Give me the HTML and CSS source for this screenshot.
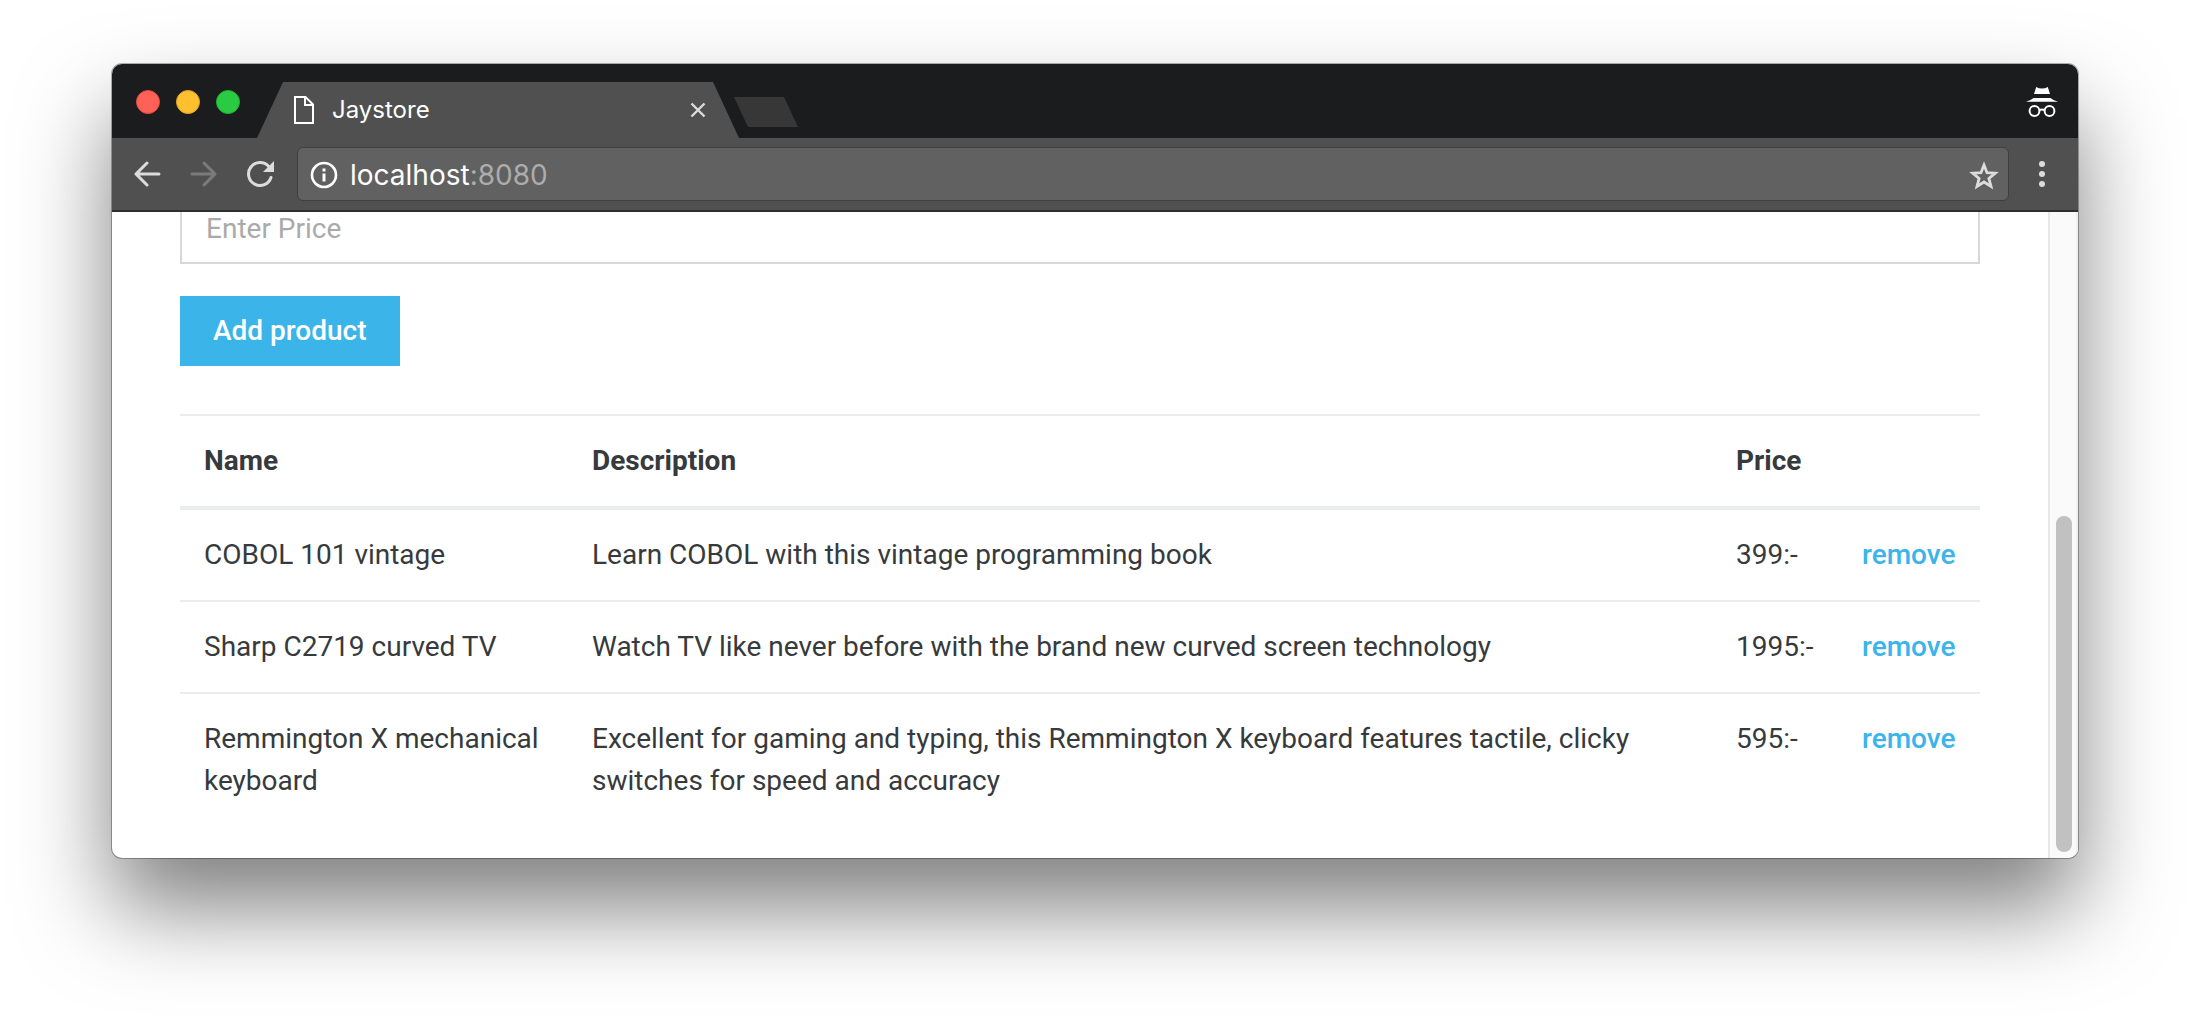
FILE: index.html
```html
<!DOCTYPE html>
<html lang="en">
<head>
<meta charset="utf-8">
<meta name="viewport" content="width=device-width, initial-scale=1">
<title>Jaystore</title>
<link rel="stylesheet" href="styles.css">
</head>
<body>
<div class="window">
  <header class="tabstrip">
    <div class="lights">
      <button class="light light-close" aria-label="Close window"></button>
      <button class="light light-min" aria-label="Minimise window"></button>
      <button class="light light-max" aria-label="Zoom window"></button>
    </div>
    <div class="tab">
      <svg class="tab-icon" width="20" height="28" viewBox="0 0 20 28" fill="none" stroke="#fff" stroke-width="2" aria-hidden="true"><path d="M1 1h10.500l7.500 7.500V27H1z"/><path d="M11 1v8h8"/></svg>
      <span class="tab-title">Jaystore</span>
      <button class="icon-button" aria-label="Close tab"><svg width="16" height="16" viewBox="0 0 16 16" stroke="#dcdcdc" stroke-width="2.400"><path d="M1.500 1.500l13 13M14.500 1.500l-13 13"/></svg></button>
    </div>
    <button class="new-tab" aria-label="New tab"></button>
    <svg class="incognito" width="32" height="30" viewBox="0 0 32 30" aria-hidden="true"><path fill="#fff" d="M8 7l2.200-7q2.500 1.500 5.800 1.500T21.800 0L24 7zM0 14.800Q4 14 7.500 11h17q3.500 3 7.500 3.800z"/><g fill="none" stroke="#fff" stroke-width="2"><circle cx="8.500" cy="24" r="4.900"/><circle cx="23.500" cy="24" r="4.900"/><path d="M13.400 23.200q2.600-1.400 5.200 0"/></g></svg>
  </header>
  <nav class="toolbar" aria-label="Navigation">
    <button class="icon-button" aria-label="Back"><svg width="28" height="28" viewBox="0 0 28 28" fill="none" stroke="#dcdcdc" stroke-width="3" stroke-linecap="round" stroke-linejoin="round"><path d="M25 14H2M13 3L2 14l11 11"/></svg></button>
    <button class="icon-button" aria-label="Forward" disabled><svg width="28" height="28" viewBox="0 0 28 28" fill="none" stroke="#7a7b7d" stroke-width="3" stroke-linecap="round" stroke-linejoin="round"><path d="M2 14h23M14 3l11 11-11 11"/></svg></button>
    <button class="icon-button" aria-label="Reload"><svg width="28" height="28" viewBox="0 0 28 28"><path d="M22.500 6.200A11.500 11.500 0 1 0 25 17.500" fill="none" stroke="#dcdcdc" stroke-width="3" stroke-linecap="round"/><path d="M28 1v11H17z" fill="#dcdcdc"/></svg></button>
    <div class="omnibox">
      <svg width="28" height="28" viewBox="0 0 28 28" aria-hidden="true"><circle cx="14" cy="14" r="12" fill="none" stroke="#fff" stroke-width="2.600"/><path fill="#fff" d="M12.500 7.500h3v3h-3zM12.500 12.500h3v8h-3z"/></svg>
      <div class="url" role="textbox" aria-label="Address">localhost<span class="port">:8080</span></div>
      <button class="icon-button" aria-label="Bookmark"><svg width="30" height="29" viewBox="0 0 30 29" fill="none" stroke="#dcdcdc" stroke-width="2.800"><path d="M15 4l3 7.700 8.200.5-6.300 5.200 2.100 8L15 21l-7 4.400 2.100-8-6.300-5.200 8.200-.5z"/></svg></button>
    </div>
    <button class="icon-button" aria-label="Menu"><svg width="6" height="26" viewBox="0 0 6 26" fill="#dcdcdc"><circle cx="3" cy="3" r="3"/><circle cx="3" cy="13" r="3"/><circle cx="3" cy="23" r="3"/></svg></button>
  </nav>
  <div class="viewport">
    <main class="page">
      <form class="product-form">
        <input class="field" type="text" placeholder="Enter Price" aria-label="Price">
        <button class="add" type="button">Add product</button>
      </form>
      <table class="products">
        <colgroup><col class="col-name"><col><col class="col-price"><col class="col-action"></colgroup>
        <thead>
          <tr><th scope="col">Name</th><th scope="col">Description</th><th scope="col">Price</th><th></th></tr>
        </thead>
        <tbody>
          <tr><td>COBOL 101 vintage</td><td>Learn COBOL with this vintage programming book</td><td>399:-</td><td><a href="#">remove</a></td></tr>
          <tr><td>Sharp C2719 curved TV</td><td>Watch TV like never before with the brand new curved screen technology</td><td>1995:-</td><td><a href="#">remove</a></td></tr>
          <tr><td>Remmington X mechanical keyboard</td><td>Excellent for gaming and typing, this Remmington X keyboard features tactile, clicky switches for speed and accuracy</td><td>595:-</td><td><a href="#">remove</a></td></tr>
        </tbody>
      </table>
    </main>
    <div class="scrollbar" aria-hidden="true"><div class="thumb"></div></div>
  </div>
</div>
</body>
</html>
```
FILE: styles.css
```css
* { box-sizing: border-box; }

body {
  margin: 0;
  padding: 64px 112px 160px;
  background: #fff;
  color: #373a3c;
  font: 28px/42px Roboto, sans-serif;
}

button { margin: 0; padding: 0; border: 0; background: none; font: inherit; }

.window {
  border-radius: 10px;
  overflow: hidden;
  background: #fff;
  box-shadow: 0 0 0 1px rgba(0, 0, 0, .3), 0 50px 90px rgba(0, 0, 0, .5);
}

/* Tab strip */
.tabstrip {
  display: flex;
  align-items: flex-end;
  height: 74px;
  padding: 2px 20px 0 24px;
  background: #1b1c1e;
}

.lights { display: flex; gap: 16px; align-self: center; margin-right: 17px; }
.light { width: 24px; height: 24px; border: 1px solid; border-radius: 50%; }
.light-close { background: #ff6058; border-color: #e14942; }
.light-min { background: #ffc02f; border-color: #e0a126; }
.light-max { background: #2acb42; border-color: #1eb032; }

.tab {
  display: flex;
  align-items: center;
  gap: 18px;
  width: 482px;
  height: 56px;
  padding: 0 33px 0 37px;
  background: #505050;
  clip-path: polygon(26px 0, calc(100% - 26px) 0, 100% 100%, 0 100%);
  color: #fff;
  font: 24px/28px Inter, sans-serif;
}
.tab-title { flex: 1; }

.icon-button { display: flex; flex: none; }

.new-tab {
  align-self: center;
  width: 64px;
  height: 30px;
  margin: 20px auto 0 -5px;
  background: #373737;
  clip-path: polygon(0 0, 50px 0, 100% 100%, 14px 100%);
}

.incognito { align-self: center; }

/* Toolbar */
.toolbar {
  display: flex;
  align-items: center;
  gap: 28px;
  height: 74px;
  padding: 0 33px 0 22px;
  background: #505050;
  border-bottom: 2px solid #2e2e2e;
}

.omnibox {
  display: flex;
  align-items: center;
  gap: 12px;
  flex: 1;
  height: 54px;
  margin: 0 2px 0 -5px;
  padding: 2px 9px 0 12px;
  background: #616161;
  border: 1px solid #3f3f3f;
  border-radius: 6px;
}
.url { flex: 1; color: #fff; font: 28px/36px Inter, sans-serif; }
.port { color: #acacac; }

/* Page */
.viewport { display: flex; overflow: hidden; }
.page { flex: 1; padding: 0 68px 32px; }

.product-form { display: flex; flex-direction: column; align-items: flex-start; gap: 32px; margin-bottom: 48px; }

/* The page is scrolled, so the field is partly under the toolbar. */
.field {
  width: 100%;
  height: 72px;
  margin-top: -20px;
  padding: 0 24px;
  border: 2px solid #d8d8d8;
  background: #fff;
  color: inherit;
  font: inherit;
}
.field::placeholder { color: #aaa; }

.add { height: 70px; padding: 0 33px; background: #3bb4e9; color: #fff; font-weight: 500; }

.products { width: 100%; table-layout: fixed; border-spacing: 0; }
.col-name { width: 388px; }
.col-price { width: 126px; }
.col-action { width: 142px; }
.products th, .products td { padding: 24px; text-align: left; vertical-align: top; }
.products th { border-top: 2px solid #ebecee; border-bottom: 4px solid #ebecee; font-weight: 700; }
.products tr + tr td { border-top: 2px solid #ebecee; }
.products td + td + td { padding-right: 0; }
.products a { color: #3bb4e9; text-decoration: none; font-weight: 500; }

.scrollbar {
  display: flex;
  flex-direction: column;
  justify-content: flex-end;
  padding: 6px 4px 6px 6px;
  background: #fafafa;
  border-left: 2px solid #e7e7e7;
  border-right: 2px solid #f0f0f0;
}
.thumb { width: 16px; height: 53%; border-radius: 8px; background: #c1c1c1; }
```
